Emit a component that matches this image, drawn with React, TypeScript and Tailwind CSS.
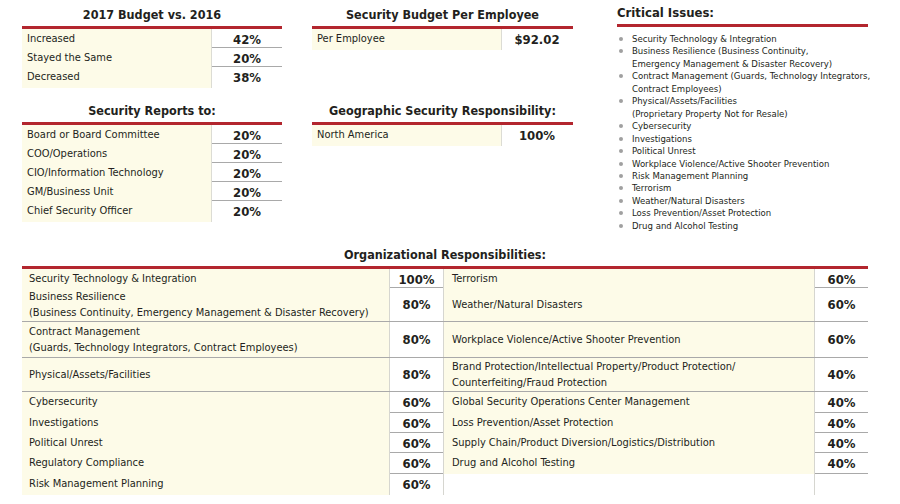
const budget = [
  { label: 'Increased', value: '42%' },
  { label: 'Stayed the Same', value: '20%' },
  { label: 'Decreased', value: '38%' },
]

const reportsTo = [
  { label: 'Board or Board Committee', value: '20%' },
  { label: 'COO/Operations', value: '20%' },
  { label: 'CIO/Information Technology', value: '20%' },
  { label: 'GM/Business Unit', value: '20%' },
  { label: 'Chief Security Officer', value: '20%' },
]

const issues: string[][] = [
  ['Security Technology & Integration'],
  ['Business Resilience (Business Continuity,', 'Emergency Management & Disaster Recovery)'],
  ['Contract Management (Guards, Technology Integrators,', 'Contract Employees)'],
  ['Physical/Assets/Facilities', '(Proprietary Property Not for Resale)'],
  ['Cybersecurity'],
  ['Investigations'],
  ['Political Unrest'],
  ['Workplace Violence/Active Shooter Prevention'],
  ['Risk Management Planning'],
  ['Terrorism'],
  ['Weather/Natural Disasters'],
  ['Loss Prevention/Asset Protection'],
  ['Drug and Alcohol Testing'],
]

const orgRows = [
  { h: 'h-[19px]', left: ['Security Technology & Integration'], lv: '100%', right: ['Terrorism'], rv: '60%' },
  {
    h: 'h-[34px]',
    left: ['Business Resilience', '(Business Continuity, Emergency Management & Disaster Recovery)'],
    lv: '80%',
    right: ['Weather/Natural Disasters'],
    rv: '60%',
  },
  {
    h: 'h-[36px]',
    left: ['Contract Management', '(Guards, Technology Integrators, Contract Employees)'],
    lv: '80%',
    right: ['Workplace Violence/Active Shooter Prevention'],
    rv: '60%',
  },
  {
    h: 'h-[34px]',
    left: ['Physical/Assets/Facilities'],
    lv: '80%',
    right: ['Brand Protection/Intellectual Property/Product Protection/', 'Counterfeiting/Fraud Protection'],
    rv: '40%',
  },
  { h: 'h-[21px]', left: ['Cybersecurity'], lv: '60%', right: ['Global Security Operations Center Management'], rv: '40%' },
  { h: 'h-[20px]', left: ['Investigations'], lv: '60%', right: ['Loss Prevention/Asset Protection'], rv: '40%' },
  { h: 'h-[20px]', left: ['Political Unrest'], lv: '60%', right: ['Supply Chain/Product Diversion/Logistics/Distribution'], rv: '40%' },
  { h: 'h-[21px]', left: ['Regulatory Compliance'], lv: '60%', right: ['Drug and Alcohol Testing'], rv: '40%' },
  { h: 'h-[20px]', left: ['Risk Management Planning'], lv: '60%', right: [], rv: '' },
]

function Title({ text, className }: { text: string; className: string }) {
  return (
    <div className={`flex items-end justify-center pb-[3px] ${className}`}>
      <h2 className="text-[12.5px] leading-[16px] font-bold whitespace-nowrap">{text}</h2>
    </div>
  )
}

function SmallTable({ rows }: { rows: { label: string; value: string }[] }) {
  return (
    <div className="border-t-[3px] border-[#b3262e]">
      {rows.map((row, i) => (
        <div
          key={i}
          className={`grid grid-cols-[190px_70px] h-[19px] ${i < rows.length - 1 ? 'border-b border-[#a9a9a9]' : ''}`}
        >
          <div className="bg-[#fdfbe8] border-r border-[#dcdcd4] pl-[5px] flex items-center text-[11px] whitespace-nowrap">
            {row.label}
          </div>
          <div className="flex items-center justify-center pt-[1px] text-[13px] font-bold">{row.value}</div>
        </div>
      ))}
    </div>
  )
}

export default function App() {
  return (
    <div className="w-[900px] h-[504px] bg-white text-[#231f20] font-['Liberation_Sans_Narrow','DejaVu_Sans_Condensed',sans-serif] overflow-hidden">
      <div className="flex pl-[22px] h-[239px]">
        {/* left column */}
        <div className="w-[260px]">
          <Title text="2017 Budget vs. 2016" className="h-[26px]" />
          <SmallTable rows={budget} />
          <Title text="Security Reports to:" className="h-[36px]" />
          <SmallTable rows={reportsTo} />
        </div>

        {/* middle column */}
        <div className="w-[261px] ml-[30px]">
          <Title text="Security Budget Per Employee" className="h-[26px]" />
          <SmallTable rows={[{ label: 'Per Employee', value: '$92.02' }]} />
          <Title text="Geographic Security Responsibility:" className="h-[74px]" />
          <SmallTable rows={[{ label: 'North America', value: '100%' }]} />
        </div>

        {/* critical issues */}
        <div className="w-[251px] ml-[44px]">
          <div className="h-[24px] flex items-end pb-[3px]">
            <h2 className="text-[13px] leading-[16px] font-bold">Critical Issues:</h2>
          </div>
          <div className="border-t-[3px] border-[#b3262e]" />
          <ul className="mt-[6px] text-[9.5px] leading-[12.45px] whitespace-nowrap">
            {issues.map((lines, i) => (
              <li key={i} className="flex">
                <span className="w-[15px] shrink-0 pl-[2px] pt-[4px]">
                  <span className="block w-[4px] h-[4px] rounded-full bg-[#a0a0a0]" />
                </span>
                <span>
                  {lines.map((l, j) => (
                    <div key={j}>{l}</div>
                  ))}
                </span>
              </li>
            ))}
          </ul>
        </div>
      </div>

      {/* organizational responsibilities */}
      <div className="pl-[22px] w-[868px]">
        <Title text="Organizational Responsibilities:" className="h-[27px]" />
        <div className="border-t-[3px] border-[#b3262e]">
          {orgRows.map((row, i) => (
            <div
              key={i}
              className={`grid grid-cols-[368px_54px_371px_53px] ${row.h} ${i < orgRows.length - 1 ? 'border-b border-[#a9a9a9]' : ''}`}
            >
              <div className="bg-[#fdfbe8] border-r border-[#d6d6d0] pl-[7px] flex flex-col justify-center text-[11px] leading-[16px] whitespace-nowrap">
                {row.left.map((l, j) => (
                  <div key={j}>{l}</div>
                ))}
              </div>
              <div className="border-r border-[#d6d6d0] flex items-center justify-center pt-[1px] text-[13px] font-bold">
                {row.lv}
              </div>
              <div
                className={`${row.right.length ? 'bg-[#fdfbe8]' : ''} border-r border-[#d6d6d0] pl-[8px] flex flex-col justify-center text-[11px] leading-[16px] whitespace-nowrap`}
              >
                {row.right.map((l, j) => (
                  <div key={j}>{l}</div>
                ))}
              </div>
              <div className="flex items-center justify-center pt-[1px] text-[13px] font-bold">{row.rv}</div>
            </div>
          ))}
        </div>
      </div>
    </div>
  )
}
